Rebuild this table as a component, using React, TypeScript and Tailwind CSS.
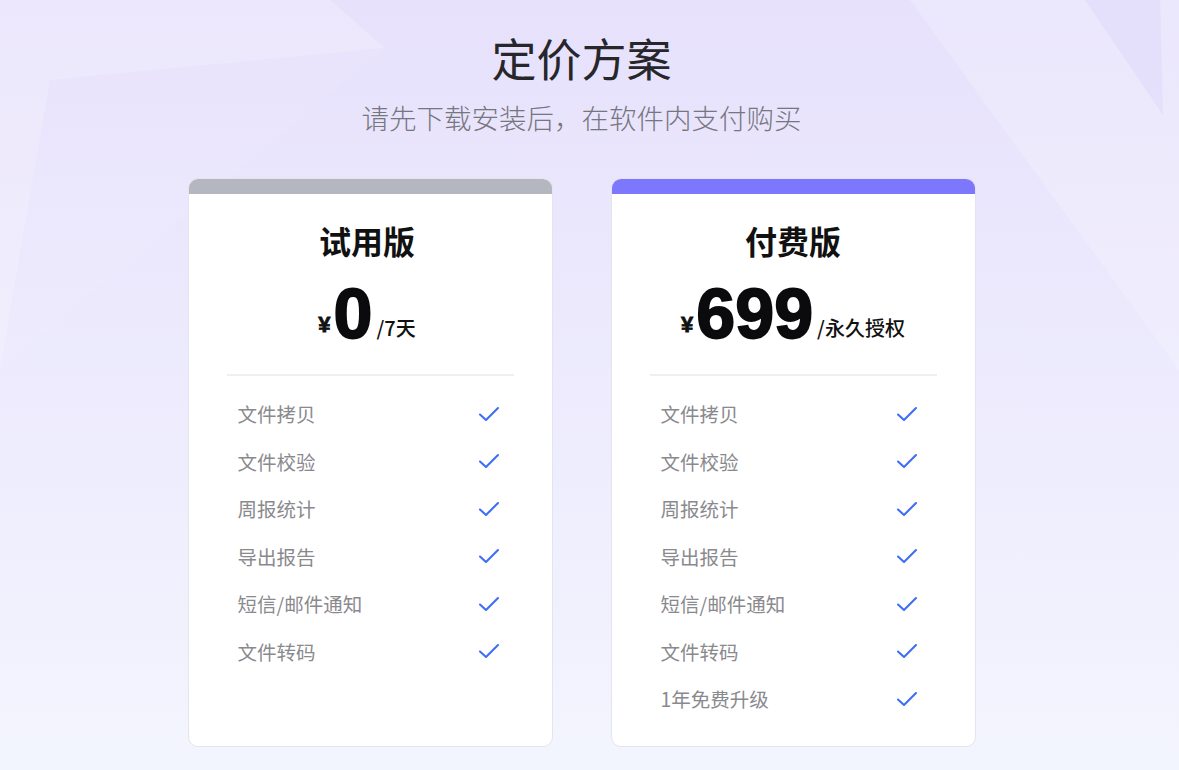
import React from "react";

const trial = ["文件拷贝", "文件校验", "周报统计", "导出报告", "短信/邮件通知", "文件转码"];
const paid = [...trial, "1年免费升级"];

function Check() {
  return (
    <svg width="22" height="16" viewBox="0 0 22 16" fill="none">
      <path d="M2 8.5 L8 14 L20 2" stroke="#3d6ef5" strokeWidth="2.1" strokeLinecap="round" strokeLinejoin="round" />
    </svg>
  );
}

function Card({
  title,
  price,
  unit,
  bar,
  items,
  shift,
  listPad,
}: {
  title: string;
  price: string;
  unit: string;
  bar: string;
  items: string[];
  shift: string;
  listPad: string;
}) {
  return (
    <div className="w-[365px] h-[569px] bg-white rounded-[10px] border border-[#e4e4ee] overflow-hidden flex flex-col">
      <div className={`h-[15px] ${bar}`} />
      <div className={`flex flex-col items-center pt-[26px] ${shift}`}>
        <div className="text-[32px] leading-[40px] font-bold text-[#111]">{title}</div>
        <div className="flex items-end mt-[20px] h-[62px]">
          <span className="text-[22px] font-black leading-none mb-[6px] mr-[3px] text-[#111] [-webkit-text-stroke:0.8px_#111]" style={{ fontFamily: "'Liberation Sans', Arial, sans-serif" }}>¥</span>
          <span className="text-[70px] font-black leading-[56px] text-[#0b0b0d] tracking-[0px] [-webkit-text-stroke:1.8px_#0b0b0d]" style={{ fontFamily: "'Liberation Sans', Arial, sans-serif" }}>{price}</span>
          <span className="text-[20px] font-medium leading-none mb-[4px] ml-[4px] text-[#111]">{unit}</span>
        </div>
      </div>
      <div className="mx-[38px] mt-[32px] h-[2px] bg-[#efeff2]" />
      <div className={`flex flex-col pl-[49px] pt-[14px] ${listPad}`}>
        {items.map((t) => (
          <div key={t} className="flex items-center justify-between h-[47.5px]">
            <span className="text-[19.5px] text-[#8a8a8e]">{t}</span>
            <Check />
          </div>
        ))}
      </div>
    </div>
  );
}

export default function App() {
  return (
    <div
      className="relative w-[1179px] h-[770px] overflow-hidden bg-gradient-to-b from-[#e7e1fc] to-[#f3f5fe]"
      style={{ fontFamily: "'Noto Sans CJK SC', 'Noto Sans', sans-serif" }}
    >
      <svg className="absolute inset-0" width="1179" height="770" viewBox="0 0 1179 770">
        <polygon points="0,0 330,0 385,48 50,80 0,370" fill="#ffffff" opacity="0.22" />
        <polygon points="50,80 385,48 0,370" fill="#ffffff" opacity="0.05" />
        <polygon points="910,0 1179,0 1179,370" fill="#ffffff" opacity="0.2" />
        <polygon points="1085,0 1160,0 1163,115" fill="#d8d0fa" opacity="0.35" />
      </svg>
      <div className="relative flex flex-col items-center pr-[16px]">
        <h1 className="mt-[28px] text-[45px] leading-[60px] text-[#26262b] font-normal">定价方案</h1>
        <p className="mt-[10px] text-[27.5px] leading-[38px] text-[#76767f] font-light">请先下载安装后，在软件内支付购买</p>
        <div className="flex gap-[58px] mt-[42px]">
          <Card title="试用版" price="0" unit="/7天" bar="bg-[#b5b7c0]" items={trial} shift="pr-[6px]" listPad="pr-[52px]" />
          <Card title="付费版" price="699" unit="/永久授权" bar="bg-[#7d77fd]" items={paid} shift="" listPad="pr-[57px]" />
        </div>
      </div>
    </div>
  );
}
